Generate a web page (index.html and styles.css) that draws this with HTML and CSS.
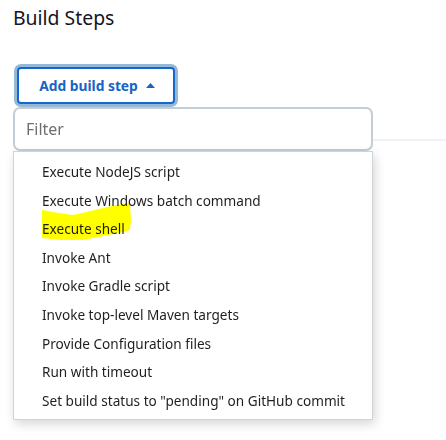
FILE: index.html
```html
<!DOCTYPE html>
<html>
<head>
<meta charset="utf-8">
<link rel="stylesheet" href="styles.css">
</head>
<body>
<section class="section">
  <h2 class="title">Build Steps</h2>
  <div class="add-wrap">
    <button class="add-btn">Add build step
      <svg class="caret" width="9" height="5" viewBox="0 0 9 5"><path d="M0 5 L4.5 0 L9 5 Z" fill="currentColor"/></svg>
    </button>
    <div class="popup">
      <div class="filter"><span class="placeholder">Filter</span></div>
      <ul class="menu">
        <li>Execute NodeJS script</li>
        <li>Execute Windows batch command</li>
        <li>Execute shell</li>
        <li>Invoke Ant</li>
        <li>Invoke Gradle script</li>
        <li>Invoke top-level Maven targets</li>
        <li>Provide Configuration files</li>
        <li>Run with timeout</li>
        <li>Set build status to "pending" on GitHub commit</li>
      </ul>
      <svg class="marker" width="92" height="42" viewBox="0 0 92 42"><polygon points="1,10 18,13 32,15 50,11 66,7 80,4 89,3 90,20 89,30 82,32 62,36 42,40 20,40 1,38" fill="#ffff00"/></svg>
    </div>
  </div>
  <div class="rule"></div>
</section>
</body>
</html>
```
FILE: styles.css
```css
html, body {
  margin: 0;
  padding: 0;
  background: #ffffff;
}
body {
  font-family: "Noto Sans", "Open Sans", "DejaVu Sans", sans-serif;
  color: #1f1f1f;
  width: 446px;
  height: 440px;
  overflow: hidden;
}
.section {
  padding: 0 0 0 13px;
}
.title {
  margin: 0;
  padding-top: 4px;
  font-size: 19.4px;
  font-weight: 400;
  line-height: 28px;
  color: #14141f;
}
.add-wrap {
  position: relative;
  margin-top: 35px;
  margin-left: 4px;
  width: 158px;
}
.add-btn {
  box-sizing: border-box;
  width: 158px;
  height: 37px;
  border: 2px solid #1467d3;
  border-radius: 4px;
  background: #ffffff;
  box-shadow: 0 0 0 3px #94b8d5;
  color: #1863c7;
  font-family: inherit;
  font-size: 13.8px;
  font-weight: 700;
  display: flex;
  align-items: center;
  justify-content: center;
  gap: 8px;
  padding: 0 0 0 2px;
}
.caret {
  margin-top: -1px;
}
.popup {
  position: absolute;
  left: -4px;
  top: 40px;
  width: 360px;
  z-index: 2;
}
.filter {
  box-sizing: border-box;
  height: 44px;
  border: 2px solid #c3cdd3;
  border-radius: 7px;
  background: #ffffff;
  display: flex;
  align-items: center;
  padding-left: 11px;
}
.placeholder {
  font-size: 16px;
  color: #6e6e73;
}
.menu {
  list-style: none;
  margin: 0;
  padding: 6px 0 4px 0;
  background: #ffffff;
  border: 1px solid #cfd4d8;
  box-shadow: 2px 4px 10px rgba(0, 0, 0, 0.16);
}
.menu li {
  height: 28.6px;
  line-height: 28.6px;
  padding-left: 28px;
  font-size: 13.6px;
  color: #1f1f1f;
  white-space: nowrap;
}
.marker {
  position: absolute;
  left: 28px;
  top: 93px;
  mix-blend-mode: multiply;
}
.rule {
  margin-top: 35px;
  height: 2px;
  background: #f0f1f6;
}
```
